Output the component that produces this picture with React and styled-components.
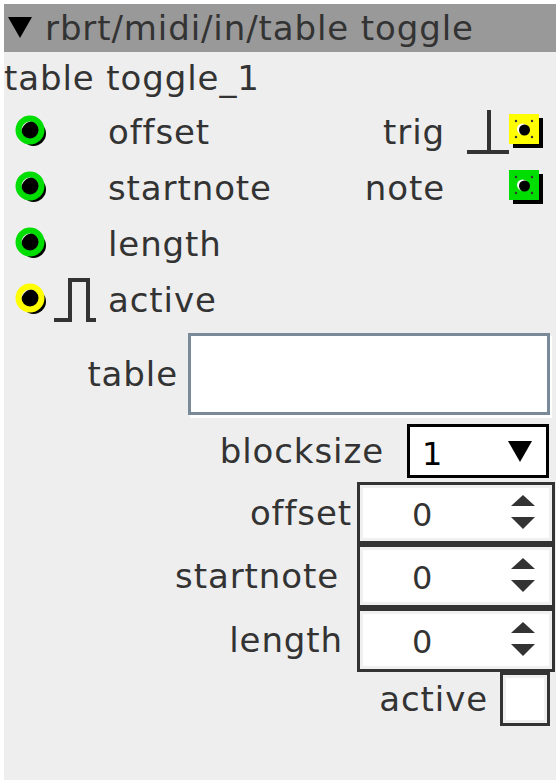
import React from "react";
import styled, { createGlobalStyle } from "styled-components";

const GlobalStyle = createGlobalStyle`
  html, body { margin: 0; padding: 0; background: #ffffff; }
  body { font-family: "DejaVu Sans", sans-serif; }
`;

const Page = styled.div`
  padding: 4px;
`;

const Panel = styled.div`
  width: 552px;
  height: 776px;
  background: #eeeeee;
  color: #333333;
  font-family: "DejaVu Sans", sans-serif;
  font-size: 34px;
  letter-spacing: 0.9px;
  display: flex;
  flex-direction: column;
`;

const TitleBar = styled.div`
  height: 48px;
  background: #999999;
  display: flex;
  align-items: center;
  gap: 13px;
  padding-left: 4px;
  white-space: nowrap;
`;

const InstanceName = styled.div`
  height: 52px;
  display: flex;
  align-items: center;
  white-space: nowrap;
`;

const IoRow = styled.div`
  height: 56px;
  display: flex;
  align-items: center;
  justify-content: space-between;
`;

const IoSide = styled.div`
  display: flex;
  align-items: center;
  margin-right: ${(p) => p.$right || 0}px;
`;

const InletIcon = styled.div`
  width: 40px;
  padding-left: 10px;
  display: flex;
`;

const Glyph = styled.div`
  width: ${(p) => p.$w}px;
  height: 44px;
  display: flex;
  align-items: flex-end;
`;

const IoLabel = styled.span`
  margin: ${(p) => p.$margin};
  white-space: nowrap;
`;

const ParamRow = styled.div`
  height: ${(p) => p.$h}px;
  display: flex;
  align-items: center;
  justify-content: flex-end;
  padding-right: ${(p) => p.$right}px;
`;

const ParamLabel = styled.span`
  margin-right: ${(p) => p.$gap}px;
  white-space: nowrap;
`;

const TableBox = styled.div`
  width: 356px;
  height: 76px;
  background: #ffffff;
  border: 3px solid #7a8a99;
  box-shadow: 2px 3px 0 #ffffff;
`;

const Dropdown = styled.div`
  box-sizing: border-box;
  width: 142px;
  height: 54px;
  background: #ffffff;
  border: 3px solid #000000;
  display: flex;
  align-items: flex-end;
  justify-content: space-between;
  padding: 0 14px 2px 12px;
  color: #000000;
  font-size: 32px;
  letter-spacing: 0;
`;

const Spinner = styled.div`
  box-sizing: border-box;
  width: 198px;
  height: ${(p) => p.$h}px;
  border: 3px solid #333333;
  padding: 3px;
  background: #f0f0f0;
  display: flex;
`;

const SpinnerInner = styled.div`
  flex: 1;
  background: #ffffff;
  display: flex;
  align-items: center;
  justify-content: space-between;
  padding: 0 14px 0 49px;
`;

const Value = styled.span`
  font-size: 32px;
  letter-spacing: 0;
  padding-top: 4px;
`;

const CheckBox = styled.div`
  box-sizing: border-box;
  width: 50px;
  height: 54px;
  border: 3px solid #333333;
  padding: 3px;
  background: #f0f0f0;
  display: flex;
`;

const CheckInner = styled.div`
  flex: 1;
  background: #ffffff;
`;

const Inlet = ({ color }) => (
  <svg width="36" height="36" viewBox="0 0 36 36">
    <circle cx="19.5" cy="19.5" r="12.5" fill="#000" />
    <circle cx="16" cy="16" r="11.5" fill="none" stroke={color} strokeWidth="6" />
  </svg>
);

const Outlet = ({ color }) => (
  <svg width="36" height="36" viewBox="0 0 36 36">
    <rect x="4" y="4" width="30" height="30" fill="#000" />
    <rect x="0" y="0" width="30" height="30" fill={color} />
    <circle cx="7" cy="7" r="1.2" fill="#333" />
    <circle cx="23" cy="7" r="1.2" fill="#333" />
    <circle cx="7" cy="23" r="1.2" fill="#333" />
    <circle cx="23" cy="23" r="1.2" fill="#333" />
    <circle cx="13.5" cy="15" r="5.5" fill="#fff" />
    <circle cx="15.5" cy="16" r="5.5" fill="#000" />
  </svg>
);

const TrigGlyph = () => (
  <svg width="42" height="44" viewBox="0 0 42 44">
    <path d="M22 0 V42 M0 42 H42" stroke="#333" strokeWidth="4" fill="none" />
  </svg>
);

const PulseGlyph = () => (
  <svg width="42" height="44" viewBox="0 0 42 44">
    <path d="M0 42 H16 V2 H34 V42 H42" stroke="#333" strokeWidth="4" fill="none" />
  </svg>
);

const Arrows = () => (
  <svg width="24" height="36" viewBox="0 0 24 36">
    <polygon points="12,0 24,11 0,11" fill="#333" />
    <polygon points="0,22 24,22 12,34" fill="#333" />
  </svg>
);

const DownTriangle = ({ style }) => (
  <svg width="24" height="22" viewBox="0 0 24 22" style={style}>
    <polygon points="0,0 24,0 12,21" fill="#000" />
  </svg>
);

const inlets = [
  { name: "offset", color: "#00dd00" },
  { name: "startnote", color: "#00dd00" },
  { name: "length", color: "#00dd00" },
  { name: "active", color: "#ffff00", pulse: true },
];

const outlets = [
  { name: "trig", color: "#ffff00", trig: true },
  { name: "note", color: "#00dd00" },
];

const spinners = [
  { name: "offset", gap: 5, h: 62 },
  { name: "startnote", gap: 18, h: 64 },
  { name: "length", gap: 14, h: 64 },
];

export default function App() {
  return (
    <Page>
      <GlobalStyle />
      <Panel>
        <TitleBar>
          <DownTriangle />
          <span>rbrt/midi/in/table toggle</span>
        </TitleBar>
        <InstanceName>table toggle_1</InstanceName>
        {inlets.map((inl, i) => {
          const out = outlets[i];
          return (
            <IoRow key={inl.name}>
              <IoSide>
                <InletIcon>
                  <Inlet color={inl.color} />
                </InletIcon>
                <Glyph $w={54}>{inl.pulse && <PulseGlyph />}</Glyph>
                <IoLabel $margin="0">{inl.name}</IoLabel>
              </IoSide>
              {out && (
                <IoSide $right={11}>
                  <IoLabel $margin="0 22px 0 0">{out.name}</IoLabel>
                  <Glyph $w={42}>{out.trig && <TrigGlyph />}</Glyph>
                  <Outlet color={out.color} />
                </IoSide>
              )}
            </IoRow>
          );
        })}
        <ParamRow $h={92} $right={6}>
          <ParamLabel $gap={10}>table</ParamLabel>
          <TableBox />
        </ParamRow>
        <ParamRow $h={62} $right={7}>
          <ParamLabel $gap={23}>blocksize</ParamLabel>
          <Dropdown>
            <span>1</span>
            <DownTriangle style={{ marginBottom: 10 }} />
          </Dropdown>
        </ParamRow>
        {spinners.map((s) => (
          <ParamRow key={s.name} $h={s.h} $right={1}>
            <ParamLabel $gap={s.gap}>{s.name}</ParamLabel>
            <Spinner $h={s.h}>
              <SpinnerInner>
                <Value>0</Value>
                <Arrows />
              </SpinnerInner>
            </Spinner>
          </ParamRow>
        ))}
        <ParamRow $h={54} $right={6}>
          <ParamLabel $gap={12}>active</ParamLabel>
          <CheckBox>
            <CheckInner />
          </CheckBox>
        </ParamRow>
      </Panel>
    </Page>
  );
}
